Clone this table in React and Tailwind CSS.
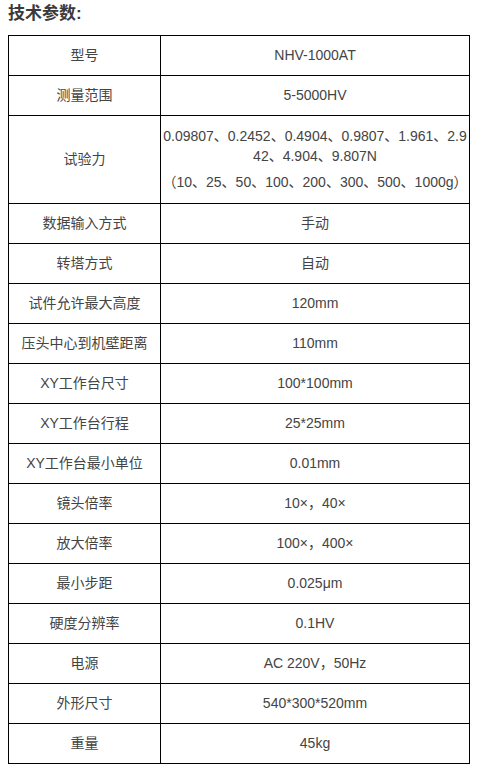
import React from "react";

const rows = [
  ["型号", "NHV-1000AT"],
  ["测量范围", "5-5000HV"],
  ["试验力", null],
  ["数据输入方式", "手动"],
  ["转塔方式", "自动"],
  ["试件允许最大高度", "120mm"],
  ["压头中心到机壁距离", "110mm"],
  ["XY工作台尺寸", "100*100mm"],
  ["XY工作台行程", "25*25mm"],
  ["XY工作台最小单位", "0.01mm"],
  ["镜头倍率", "10×，40×"],
  ["放大倍率", "100×，400×"],
  ["最小步距", "0.025μm"],
  ["硬度分辨率", "0.1HV"],
  ["电源", "AC 220V，50Hz"],
  ["外形尺寸", "540*300*520mm"],
  ["重量", "45kg"],
];

export default function App() {
  return (
    <div
      className="w-[484px] h-[771px] bg-white text-[#444]"
      style={{ fontFamily: '"Liberation Sans", "Noto Sans CJK SC", sans-serif' }}
    >
      <div className="pl-[8px] pt-[3px] h-[35px] text-[17px] font-bold leading-[22px] text-[#3a3a3a]">
        技术参数:
      </div>
      <table className="ml-[8px] w-[462px] border-collapse border border-black text-[14px]">
        <tbody>
          {rows.map(([k, v], i) => (
            <tr key={i} className={v === null ? "h-[88px]" : "h-[40px]"}>
              <td className="w-[152px] border border-black text-center align-middle p-0">{k}</td>
              <td className="border border-black text-center align-middle p-0">
                {v === null ? (
                  <div className="flex flex-col items-center leading-[20px] pb-[2px]">
                    <span className="whitespace-nowrap">0.09807、0.2452、0.4904、0.9807、1.961、2.9</span>
                    <span>42、4.904、9.807N</span>
                    <span className="mt-[6px]">（10、25、50、100、200、300、500、1000g）</span>
                  </div>
                ) : (
                  v
                )}
              </td>
            </tr>
          ))}
        </tbody>
      </table>
    </div>
  );
}
